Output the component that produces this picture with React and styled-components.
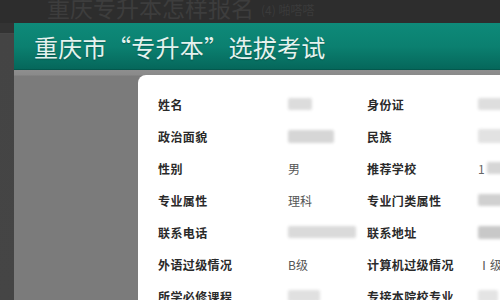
import React from "react";
import styled, { createGlobalStyle } from "styled-components";

const Global = createGlobalStyle`
  html, body { margin: 0; padding: 0; background: #2d2d2d; overflow: hidden; }
  body { font-family: "Noto Sans CJK SC", "Noto Sans", sans-serif; }
`;

const Page = styled.div`
  width: 500px;
  height: 300px;
  display: flex;
  flex-direction: column;
  overflow: hidden;
  background: #2d2d2d;
`;

const TopBar = styled.div`
  height: 23px;
  flex-shrink: 0;
  display: flex;
  align-items: flex-end;
  gap: 7px;
  padding-left: 47px;
  overflow: hidden;
`;

const GhostTitle = styled.span`
  font-size: 23px;
  line-height: 28px;
  color: #3d3d3d;
  margin-bottom: 2px;
  white-space: nowrap;
`;

const GhostSub = styled.span`
  font-size: 12px;
  line-height: 16px;
  color: #3b3b3b;
  margin-bottom: 5px;
  white-space: nowrap;
`;

const Body = styled.div`
  flex: 1;
  min-height: 0;
  display: flex;
`;

const LeftStrip = styled.div`
  width: 14px;
  flex-shrink: 0;
  background: linear-gradient(#333 0, #333 10px, #4a4a4a 10px, #444 11px, #454545 100%);
`;

const Main = styled.div`
  flex: 1;
  min-width: 0;
  display: flex;
  flex-direction: column;
`;

const Banner = styled.div`
  height: 47px;
  flex-shrink: 0;
  background: linear-gradient(#0e8a79 0%, #0b8070 50%, #05665a 100%);
  display: flex;
  align-items: center;
  padding-left: 20px;
  box-shadow: inset 0 -1px 0 #04584d;
`;

const BannerTitle = styled.h1`
  margin: 0 0 1px 0;
  font-size: 24px;
  font-weight: 400;
  letter-spacing: 0.3px;
  color: #e4f2ee;
  text-shadow: 0 1px 1px rgba(0, 0, 0, 0.25);
  white-space: nowrap;
`;

const Stage = styled.div`
  flex: 1;
  min-height: 0;
  display: flex;
  padding: 5px 0 0 124px;
  background: linear-gradient(#8e8e8e 0, #8a8a8a 5px, #7b7b7b 6px, #7b7b7b 100%);
`;

const Card = styled.div`
  flex: 1;
  min-width: 0;
  background: #fff;
  border-top-left-radius: 8px;
  padding: 13px 0 0 20px;
  overflow: hidden;
`;

const Grid = styled.div`
  display: grid;
  grid-template-columns: 130px 79px 111px 1fr;
  grid-auto-rows: 32px;
  align-items: center;
`;

const Label = styled.div`
  font-size: 12px;
  font-weight: 700;
  color: #2a2a2a;
  letter-spacing: 0.4px;
  white-space: nowrap;
`;

const Value = styled.div`
  font-size: 12px;
  color: #555;
  white-space: nowrap;
  display: flex;
  align-items: center;
  gap: 2px;
`;

const Blur = styled.span`
  display: inline-block;
  flex-shrink: 0;
  height: ${(p) => p.$h || 12}px;
  width: ${(p) => p.$w}px;
  background: ${(p) => p.$c || "#d8d8d8"};
  filter: blur(1.5px);
  border-radius: 2px;
`;

const Digit = styled.span`
  color: #666;
  font-size: 12px;
`;

const rows = [
  ["姓名", <Blur $w={24} $c="#dcdcdc" />, "身份证", <Blur $w={30} $c="#dedede" />],
  ["政治面貌", <Blur $w={46} $h={13} $c="#d6d6d6" />, "民族", <Blur $w={30} $h={14} $c="#e2e2e2" />],
  ["性别", "男", "推荐学校", <><Digit>1</Digit><Blur $w={20} $c="#d6d6d6" /></>],
  ["专业属性", "理科", "专业门类属性", <Blur $w={26} $c="#d0d0d0" />],
  ["联系电话", <Blur $w={68} $c="#dadada" />, "联系地址", <Blur $w={26} $h={13} $c="#c8c8c8" />],
  ["外语过级情况", "B级", "计算机过级情况", "Ⅰ级"],
  ["所学必修课程", <Blur $w={32} $c="#e0e0e0" />, "专接本院校专业", <Blur $w={20} $c="#e4e4e4" />],
];

export default function App() {
  return (
    <Page>
      <Global />
      <TopBar>
        <GhostTitle>重庆专升本怎样报名</GhostTitle>
        <GhostSub>(4) 啪嗒嗒</GhostSub>
      </TopBar>
      <Body>
        <LeftStrip />
        <Main>
          <Banner>
            <BannerTitle>重庆市“专升本”选拔考试</BannerTitle>
          </Banner>
          <Stage>
            <Card>
              <Grid>
                {rows.map((r, i) => (
                  <React.Fragment key={i}>
                    <Label>{r[0]}</Label>
                    <Value>{r[1]}</Value>
                    <Label>{r[2]}</Label>
                    <Value>{r[3]}</Value>
                  </React.Fragment>
                ))}
              </Grid>
            </Card>
          </Stage>
        </Main>
      </Body>
    </Page>
  );
}
